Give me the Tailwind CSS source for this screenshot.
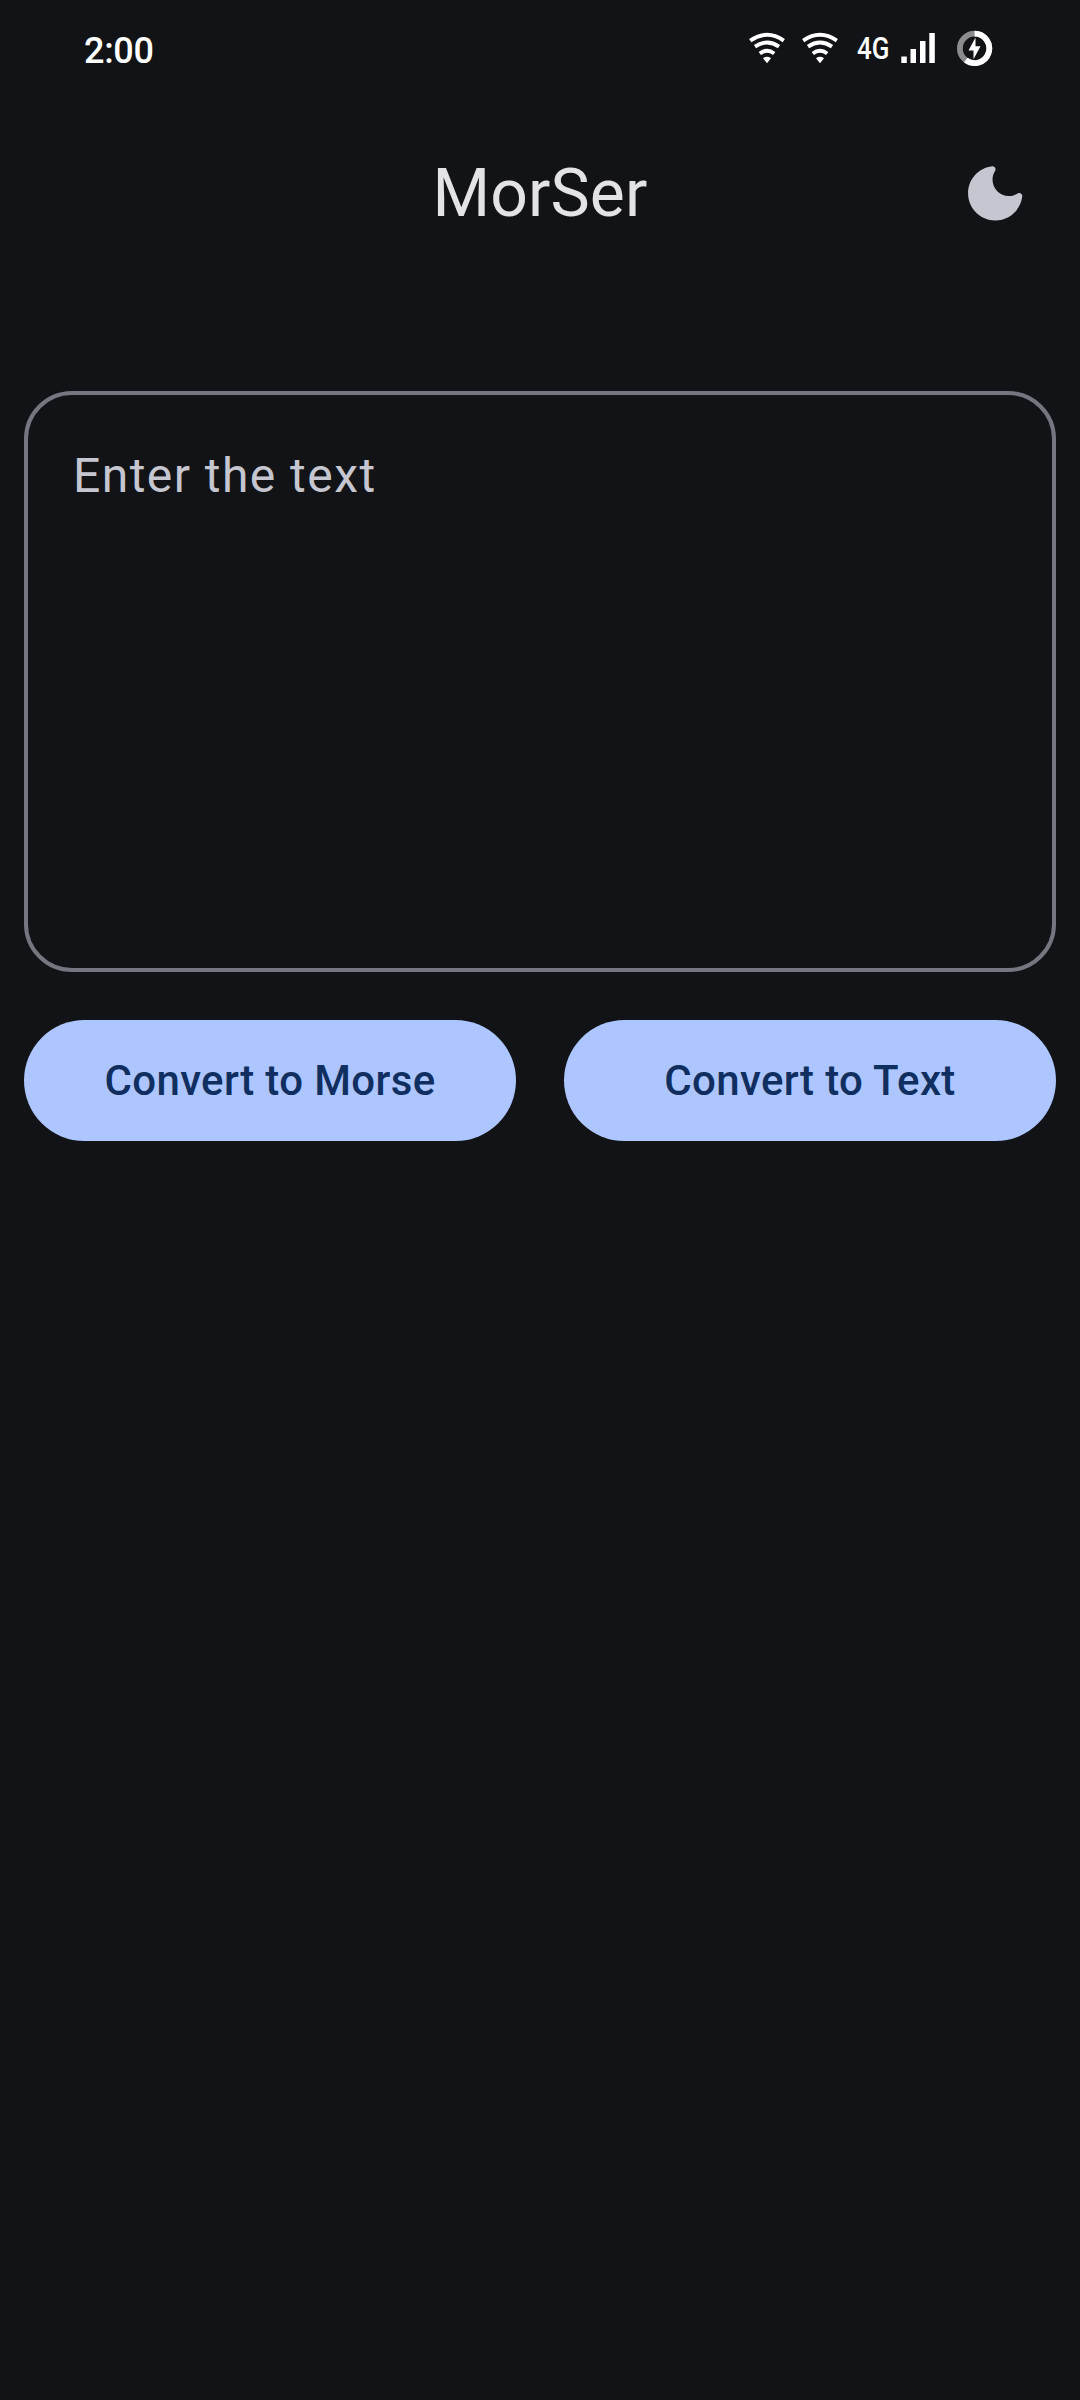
<!DOCTYPE html>
<html lang="en">
<head>
<meta charset="utf-8">
<title>MorSer</title>
<script src="https://cdn.jsdelivr.net/npm/@tailwindcss/browser@4"></script>
</head>
<body class="bg-[#121316]">
<div class="flex h-[2400px] w-[1080px] flex-col overflow-hidden bg-[#121316] font-['Roboto',sans-serif]">
  <header class="flex h-[100px] shrink-0 items-start justify-between pl-[84px] pr-[86px]">
    <span class="mt-[30px] text-[36px] leading-[42px] font-medium tracking-[-0.3px] text-white">2:00</span>
    <div class="flex h-[60px] pt-5 text-white">
      <svg class="h-[60px] w-[53px]" viewBox="0 0 53 60" fill="none" stroke="currentColor" stroke-width="3.9"><path d="M10.2 20.6Q27 9 43.8 20.6M15 26.700Q27 18.500 39 26.700M19.800 33.500Q27 28.200 34.200 33.500"/><path d="M23 38.200Q27 35.300 31 38.200L27 43.200z" fill="currentColor" stroke="none"/></svg>
      <svg class="h-[60px] w-[53px]" viewBox="0 0 53 60" fill="none" stroke="currentColor" stroke-width="3.9"><path d="M10.2 20.6Q27 9 43.8 20.6M15 26.700Q27 18.500 39 26.700M19.800 33.500Q27 28.200 34.200 33.500"/><path d="M23 38.200Q27 35.300 31 38.200L27 43.200z" fill="currentColor" stroke="none"/></svg>
      <span class="ml-[11px] mt-[10px] w-[41px] origin-left scale-x-[0.81] text-[32px] leading-[36px] font-medium">4G</span>
      <svg class="h-[60px] w-[96px]" viewBox="0 0 96 60" fill="currentColor"><path d="M3.300 36.500h5.500V43H3.300zM12.500 29h5.500v14h-5.500zM22 21h5.500v22H22zM31.300 13h5.500v30h-5.500z"/><circle cx="76.600" cy="28.400" r="14.700" fill="none" stroke="#8c8c8e" stroke-width="5.800"/><path d="M76.600 13.700A14.700 14.700 0 1 1 67.800 40.200" fill="none" stroke="currentColor" stroke-width="5.800"/><path d="M77.500 17.500L70.500 30.500H75.500V39.300L82.500 26.300H77.500z"/></svg>
    </div>
  </header>
  <div class="grid h-[291px] shrink-0 grid-cols-[1fr_auto_1fr] items-start">
    <h1 class="col-start-2 mt-[54px] text-[66px] leading-[80px] font-normal tracking-[0.1px] text-[#e3e2e6]">MorSer</h1>
    <svg class="mt-[57px] mr-[48.500px] size-[72.500px] justify-self-end" viewBox="0 0 24 24" fill="#c5c6d0"><path d="M11.010 3.050C6.510 3.540 3 7.360 3 12c0 4.970 4.030 9 9 9 4.630 0 8.450-3.500 8.950-8 .09-.79-.78-1.420-1.540-.95-.84.54-1.840.85-2.910.85-2.980 0-5.400-2.420-5.400-5.400 0-1.060.31-2.060.84-2.890.45-.67-.04-1.630-.93-1.560z"/></svg>
  </div>
  <main class="flex flex-col gap-12 px-6">
    <div class="h-[581px] rounded-[48px] border-4 border-[#757780] px-[45px] pt-[45px] text-[48px] leading-[72px] tracking-[1.45px] text-[#c5c6d0]">Enter the text</div>
    <div class="grid grid-cols-2 gap-12">
      <button class="h-[121px] rounded-full bg-[#adc6ff] text-[42px] leading-[60px] font-medium tracking-[0.36px] text-[#102f60]">Convert to Morse</button>
      <button class="h-[121px] rounded-full bg-[#adc6ff] text-[42px] leading-[60px] font-medium tracking-[0.36px] text-[#102f60]">Convert to Text</button>
    </div>
  </main>
</div>
</body>
</html>
